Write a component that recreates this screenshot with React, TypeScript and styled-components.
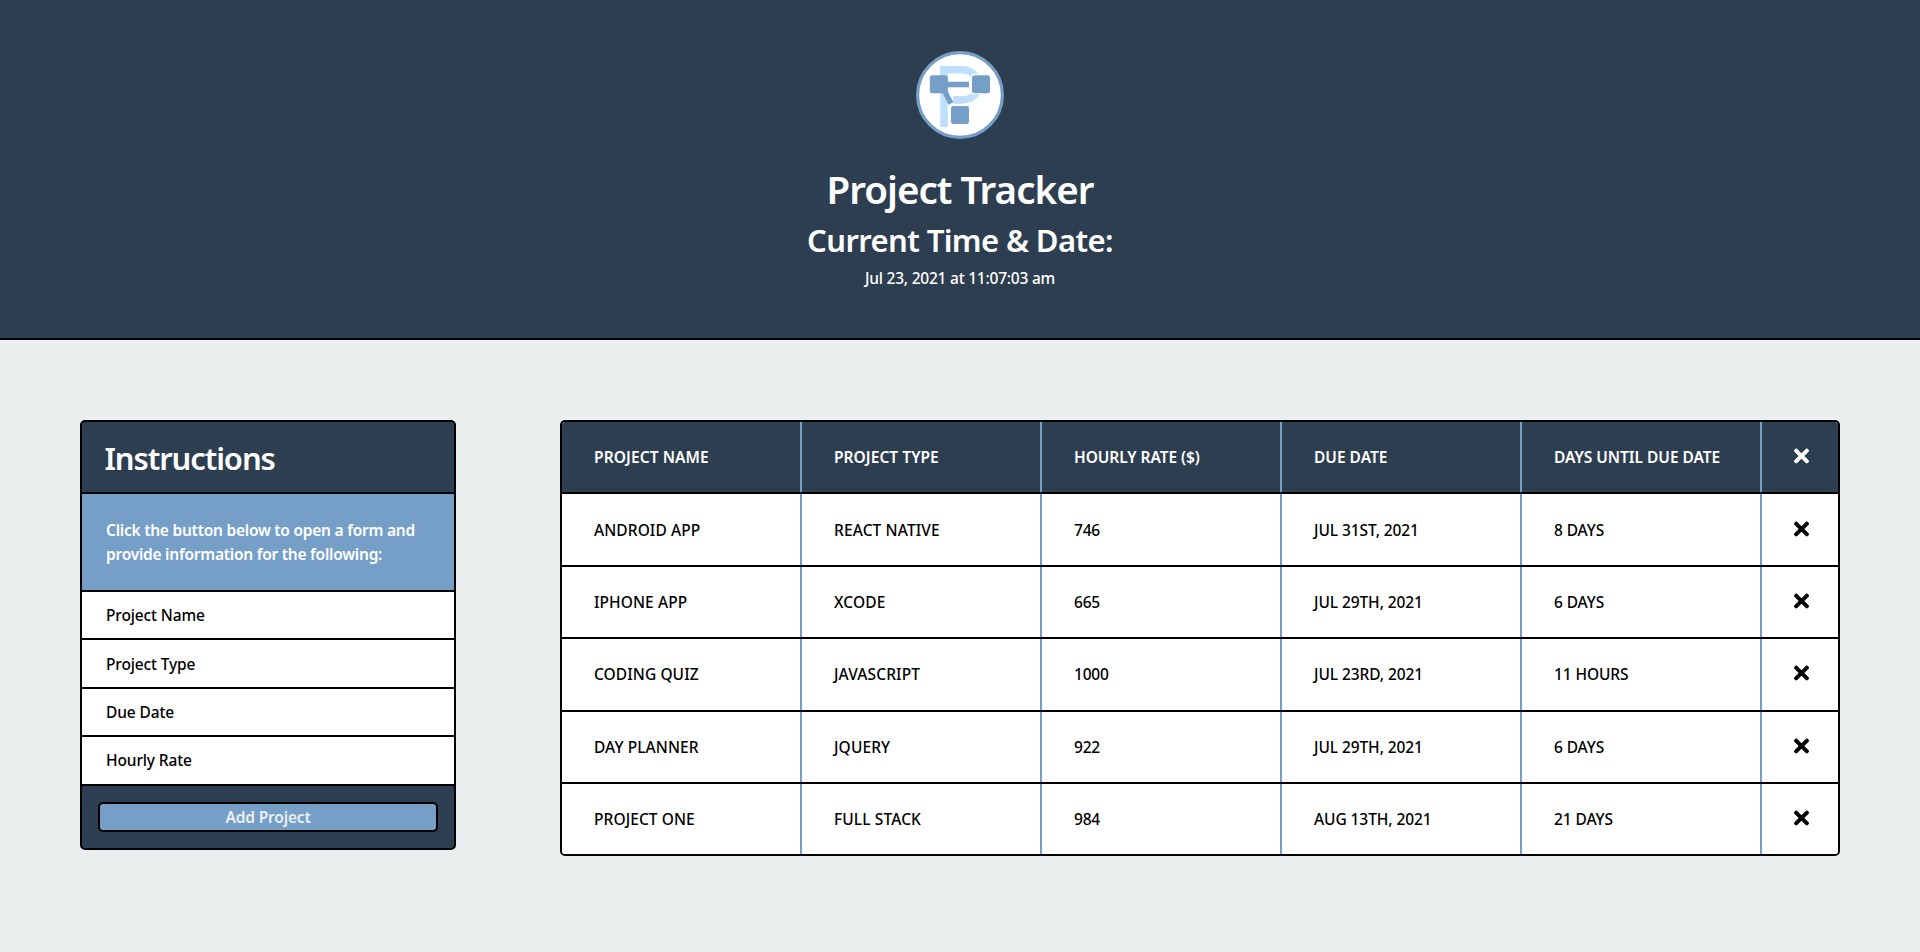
import React from "react";
import styled, { createGlobalStyle } from "styled-components";
import { FaTimes } from "react-icons/fa";

const navy = "#2d3e50";
const blue = "#769fc8";

const GlobalStyle = createGlobalStyle`
  * { box-sizing: border-box; margin: 0; padding: 0; }
  body {
    background: #ebeff0;
    color: #000;
    font: 500 15.5px/24px "Noto Sans", sans-serif;
  }
`;

const Header = styled.header`
  height: 340px;
  padding-top: 51px;
  display: flex;
  flex-direction: column;
  align-items: center;
  background: ${navy};
  border-bottom: 2px solid #000;
  color: #fff;
`;

const Logo = styled.svg`
  width: 88px;
  height: 88px;
  margin-bottom: 26px;
`;

const Title = styled.h1`
  font-size: 38.5px;
  font-weight: 600;
  line-height: 48px;
  letter-spacing: -0.95px;
`;

const Subtitle = styled.h2`
  margin-top: 8px;
  font-size: 31px;
  font-weight: 600;
  line-height: 38px;
  letter-spacing: -0.61px;
`;

const Clock = styled.p`
  margin-top: 7px;
  letter-spacing: -0.22px;
`;

const Main = styled.main`
  display: flex;
  align-items: flex-start;
  justify-content: space-between;
  padding: 80px 80px 0;
`;

const Panel = styled.section`
  border: 2px solid #000;
  border-radius: 5px;
  overflow: hidden;
  background: #fff;
`;

const Sidebar = styled(Panel)`
  width: 376px;
  height: 430px;
  background: ${navy};
`;

const SidebarTitle = styled.h2`
  height: 72px;
  padding: 17px 22px 0 22.5px;
  border-bottom: 2px solid #000;
  color: #fff;
  font-size: 31px;
  font-weight: 600;
  line-height: 38px;
  letter-spacing: -1.1px;
`;

const Hint = styled.p`
  height: 97.95px;
  padding: 24px 0 0 24px;
  border-bottom: 2px solid #000;
  background: ${blue};
  color: #fff;
  font-weight: 600;
  letter-spacing: -0.24px;
  white-space: nowrap;
`;

const FieldList = styled.ul`
  list-style: none;
  background: #fff;
`;

const Field = styled.li`
  height: 48.4px;
  padding: 11.2px 24px 0;
  border-bottom: 2px solid #000;
  letter-spacing: -0.13px;
`;

const AddButton = styled.button`
  display: block;
  width: 340px;
  height: 30px;
  margin: 16px;
  border: 2px solid #000;
  border-radius: 5px;
  background: ${blue};
  color: #ebeff0;
  font: 600 15.5px/24px "Noto Sans", sans-serif;
  letter-spacing: -0.15px;
`;

const Table = styled(Panel)`
  width: 1280px;
`;

const Row = styled.div<{ $head?: boolean }>`
  display: grid;
  grid-template-columns: repeat(5, 240px) 1fr;
  height: ${(p) => (p.$head ? "72.2px" : "72.45px")};
  border-bottom: 2px solid #000;
  background: ${(p) => (p.$head ? navy : "#fff")};
  color: ${(p) => (p.$head ? "#fff" : "#000")};
  font-weight: ${(p) => (p.$head ? 600 : 500)};

  &:last-child {
    height: 70px;
    border-bottom: 0;
  }
`;

const Cell = styled.div<{ $spacing?: number }>`
  padding: 23.35px 0 0 32px;
  border-right: 2px solid ${blue};
  letter-spacing: ${(p) => p.$spacing ?? 0}px;
  white-space: nowrap;
`;

const RemoveCell = styled.div`
  display: flex;
  justify-content: center;
  padding: 23.35px 0 0 2px;

  svg {
    width: 15px;
    height: 22px;
  }
`;

const columns = [
  { label: "PROJECT NAME", headSpacing: 0.1, spacing: 0.08 },
  { label: "PROJECT TYPE", headSpacing: 0.05, spacing: 0.12 },
  { label: "HOURLY RATE ($)", headSpacing: -0.05, spacing: -0.2 },
  { label: "DUE DATE", headSpacing: 0, spacing: -0.08 },
  { label: "DAYS UNTIL DUE DATE", headSpacing: -0.03, spacing: -0.1 },
];

const projects = [
  ["ANDROID APP", "REACT NATIVE", "746", "JUL 31ST, 2021", "8 DAYS"],
  ["IPHONE APP", "XCODE", "665", "JUL 29TH, 2021", "6 DAYS"],
  ["CODING QUIZ", "JAVASCRIPT", "1000", "JUL 23RD, 2021", "11 HOURS"],
  ["DAY PLANNER", "JQUERY", "922", "JUL 29TH, 2021", "6 DAYS"],
  ["PROJECT ONE", "FULL STACK", "984", "AUG 13TH, 2021", "21 DAYS"],
];

const fields = ["Project Name", "Project Type", "Due Date", "Hourly Rate"];

function TrackerLogo() {
  return (
    <Logo viewBox="0 0 88 88">
      <circle cx="44" cy="44" r="42.4" fill="#fff" stroke={blue} strokeWidth="3.2" />
      <path
        d="M28 76V18.8H46C56 18.8 62 26 62 34C62 43 56 48.9 46 48.9H37"
        fill="none"
        stroke="#bfdfff"
        strokeWidth="7.6"
      />
      <g fill={blue} stroke="#fff" strokeWidth="2.8" paintOrder="stroke">
        <rect x="56" y="24.2" width="18" height="18" rx="2.5" />
        <rect x="35" y="55" width="18" height="18" rx="2.5" />
      </g>
      <rect x="13.8" y="24.2" width="18" height="18" rx="2.5" fill={blue} />
      <path d="M31 33.5H53" stroke={blue} strokeWidth="5.6" />
      <path d="M27.5 38L35 52.5" stroke={blue} strokeWidth="5.4" />
    </Logo>
  );
}

export default function App() {
  return (
    <>
      <GlobalStyle />
      <Header>
        <TrackerLogo />
        <Title>Project Tracker</Title>
        <Subtitle>Current Time &amp; Date:</Subtitle>
        <Clock>Jul 23, 2021 at 11:07:03 am</Clock>
      </Header>
      <Main>
        <Sidebar>
          <SidebarTitle>Instructions</SidebarTitle>
          <Hint>
            Click the button below to open a form and
            <br />
            provide information for the following:
          </Hint>
          <FieldList>
            {fields.map((field) => (
              <Field key={field}>{field}</Field>
            ))}
          </FieldList>
          <AddButton>Add Project</AddButton>
        </Sidebar>
        <Table>
          <Row $head>
            {columns.map((column) => (
              <Cell key={column.label} $spacing={column.headSpacing}>
                {column.label}
              </Cell>
            ))}
            <RemoveCell>
              <FaTimes />
            </RemoveCell>
          </Row>
          {projects.map((project) => (
            <Row key={project[0]}>
              {project.map((value, i) => (
                <Cell key={columns[i].label} $spacing={columns[i].spacing}>
                  {value}
                </Cell>
              ))}
              <RemoveCell>
                <FaTimes />
              </RemoveCell>
            </Row>
          ))}
        </Table>
      </Main>
    </>
  );
}
